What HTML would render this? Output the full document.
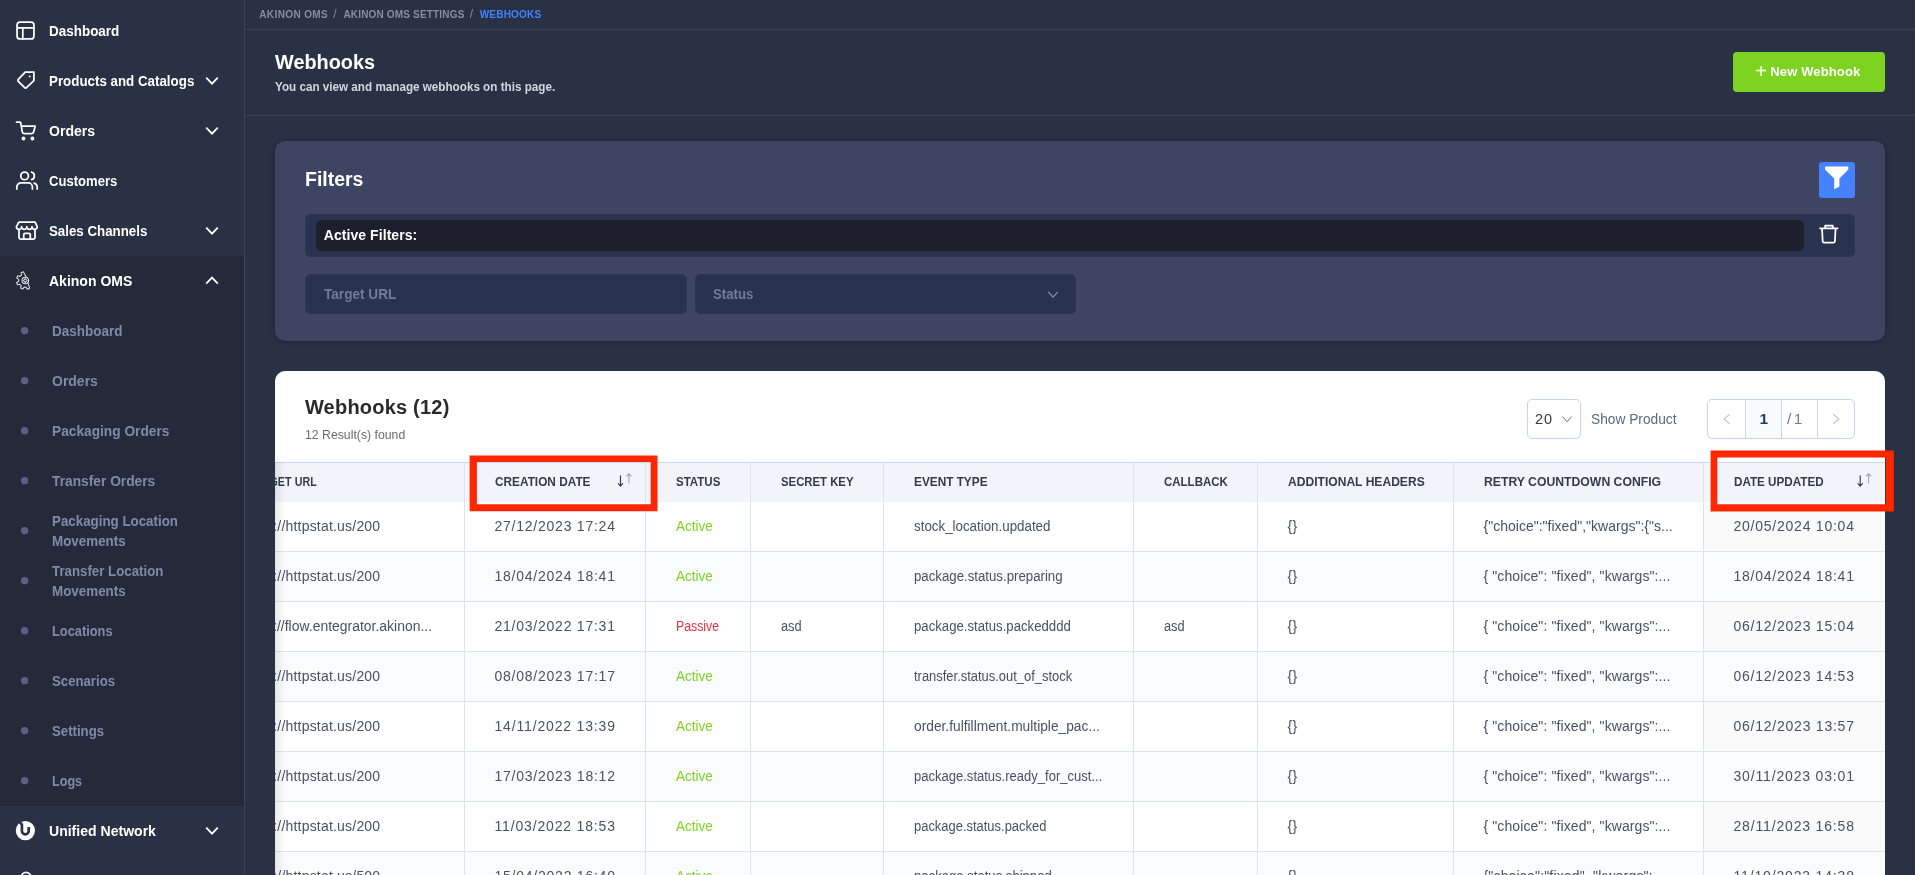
<!DOCTYPE html><html lang="en"><head><meta charset="utf-8"><title>Webhooks</title><style>
*{box-sizing:border-box;margin:0;padding:0}
html,body{width:1915px;height:875px;overflow:hidden;background:#293145;font-family:"Liberation Sans",sans-serif;}
.root{position:absolute;left:0;top:0;width:1915px;height:875px;overflow:hidden;will-change:transform}
.t{position:absolute;white-space:nowrap;display:block}
aside{position:absolute;left:0;top:0;width:245px;height:875px;background:#293145;border-right:1px solid #3e4353;overflow:hidden;z-index:5}
.sub{position:absolute;left:0;top:256px;width:244px;height:550px;background:#252a3b}
svg{position:absolute;overflow:visible}
main{position:absolute;left:0;top:0;width:1915px;height:875px;overflow:hidden}
.crumb{position:absolute;left:245px;top:0;width:1670px;height:30px;border-bottom:1px solid #3e4353}
.head{position:absolute;left:245px;top:30px;width:1670px;height:86px;border-bottom:1px solid #3e4353}
.btn-new{position:absolute;left:1733px;top:52px;width:152px;height:40px;border-radius:4px;background:#7ed321;border:0;padding:0;font:inherit;display:block}
.fcard{position:absolute;left:275px;top:141px;width:1610px;height:200px;border-radius:10px;background:#3d4562;box-shadow:0 1px 5px rgba(0,0,0,.3)}
.fbtn{position:absolute;left:1819px;top:162px;width:36px;height:36px;border-radius:3px;background:#4482ff}
.af{position:absolute;left:305px;top:214px;width:1550px;height:43px;border-radius:5px;background:#29334f;border:1px solid #2e3454}
.afi{position:absolute;left:315.8px;top:220px;width:1488.2px;height:31px;border-radius:5px;background:#1e1f2d}
.inp{position:absolute;top:274px;height:40px;border-radius:5px;background:#29334f;border:1px solid #2e3454}
.tcard{position:absolute;left:275px;top:371px;width:1610px;height:520px;border-radius:10px 10px 0 0;background:#fff;overflow:hidden}

table{position:absolute;left:-60px;top:91px;border-collapse:separate;border-spacing:0;table-layout:fixed;width:1670px}
th,td{position:relative;border-right:1px solid #dae5e8;padding:0;overflow:hidden;text-align:left;font-weight:400}
th{height:40px;background:#f2f4f9;border-top:1px solid #c8d7ec}
td{height:50px;border-bottom:1px solid #dae5e8;background:#fff}
tr.alt td{background:#fafbfd}
td.sorted{background:#fafafa}
th:last-child,td:last-child{border-right:none}
.lshadow{position:absolute;left:0;top:91px;width:10px;height:500px;background:linear-gradient(to right,rgba(0,0,0,.09),rgba(0,0,0,0));}
.sel{position:absolute;left:1252px;top:28px;width:54px;height:40px;border:1px solid #c5d6ee;border-radius:5px;background:#fff}
.pg{position:absolute;left:1432px;top:28px;width:148px;height:40px;border:1px solid #c5d6ee;border-radius:5px;background:#fff;overflow:hidden}
.pg i{position:absolute;top:0;width:1px;height:40px;background:#c5d6ee}
.pg b{position:absolute;left:38px;top:0;width:36px;height:38px;background:#f8fafc}
</style></head><body><div class="root"><aside><nav><div class="sub"></div><span class="t" id="m0" style="left:48.99px;top:23.73px;font-size:14.5px;line-height:14.5px;font-weight:700;color:#ffffff;transform:scaleX(0.9281);transform-origin:0 50%;">Dashboard</span><span class="t" id="m1" style="left:48.99px;top:73.73px;font-size:14.5px;line-height:14.5px;font-weight:700;color:#ffffff;transform:scaleX(0.9201);transform-origin:0 50%;">Products and Catalogs</span><svg style="left:0;top:0" width="1" height="1"><path d="M206.20 77.60 L212.00 83.60 L217.80 77.60" fill="none" stroke="#fff" stroke-width="1.8" stroke-linecap="butt" stroke-linejoin="miter"/></svg><span class="t" id="m2" style="left:48.99px;top:123.73px;font-size:14.5px;line-height:14.5px;font-weight:700;color:#ffffff;transform:scaleX(0.9694);transform-origin:0 50%;">Orders</span><svg style="left:0;top:0" width="1" height="1"><path d="M206.20 127.60 L212.00 133.60 L217.80 127.60" fill="none" stroke="#fff" stroke-width="1.8" stroke-linecap="butt" stroke-linejoin="miter"/></svg><span class="t" id="m3" style="left:48.99px;top:173.73px;font-size:14.5px;line-height:14.5px;font-weight:700;color:#ffffff;transform:scaleX(0.9017);transform-origin:0 50%;">Customers</span><span class="t" id="m4" style="left:48.99px;top:223.73px;font-size:14.5px;line-height:14.5px;font-weight:700;color:#ffffff;transform:scaleX(0.9171);transform-origin:0 50%;">Sales Channels</span><svg style="left:0;top:0" width="1" height="1"><path d="M206.20 227.60 L212.00 233.60 L217.80 227.60" fill="none" stroke="#fff" stroke-width="1.8" stroke-linecap="butt" stroke-linejoin="miter"/></svg><span class="t" id="m5" style="left:48.99px;top:273.73px;font-size:14.5px;line-height:14.5px;font-weight:700;color:#ffffff;transform:scaleX(0.9664);transform-origin:0 50%;">Akinon OMS</span><svg style="left:0;top:0" width="1" height="1"><path d="M206.20 283.60 L212.00 277.60 L217.80 283.60" fill="none" stroke="#fff" stroke-width="1.8" stroke-linecap="butt" stroke-linejoin="miter"/></svg><span class="t" id="m6" style="left:48.99px;top:823.73px;font-size:14.5px;line-height:14.5px;font-weight:700;color:#ffffff;transform:scaleX(0.9686);transform-origin:0 50%;">Unified Network</span><svg style="left:0;top:0" width="1" height="1"><path d="M206.20 827.60 L212.00 833.60 L217.80 827.60" fill="none" stroke="#fff" stroke-width="1.8" stroke-linecap="butt" stroke-linejoin="miter"/></svg><span class="t" id="s0" style="left:51.80px;top:324.18px;font-size:14.2px;line-height:14.2px;font-weight:700;color:#808aa8;transform:scaleX(0.9497);transform-origin:0 50%;">Dashboard</span><span class="t" id="s1" style="left:51.80px;top:374.18px;font-size:14.2px;line-height:14.2px;font-weight:700;color:#808aa8;transform:scaleX(0.9860);transform-origin:0 50%;">Orders</span><span class="t" id="s2" style="left:51.80px;top:424.18px;font-size:14.2px;line-height:14.2px;font-weight:700;color:#808aa8;transform:scaleX(0.9666);transform-origin:0 50%;">Packaging Orders</span><span class="t" id="s3" style="left:51.80px;top:474.18px;font-size:14.2px;line-height:14.2px;font-weight:700;color:#808aa8;transform:scaleX(0.9700);transform-origin:0 50%;">Transfer Orders</span><span class="t" id="s4" style="left:51.80px;top:514.18px;font-size:14.2px;line-height:14.2px;font-weight:700;color:#808aa8;transform:scaleX(0.9399);transform-origin:0 50%;">Packaging Location</span><span class="t" id="s5" style="left:51.80px;top:534.18px;font-size:14.2px;line-height:14.2px;font-weight:700;color:#808aa8;transform:scaleX(0.9438);transform-origin:0 50%;">Movements</span><span class="t" id="s6" style="left:51.80px;top:564.18px;font-size:14.2px;line-height:14.2px;font-weight:700;color:#808aa8;transform:scaleX(0.9356);transform-origin:0 50%;">Transfer Location</span><span class="t" id="s7" style="left:51.80px;top:584.18px;font-size:14.2px;line-height:14.2px;font-weight:700;color:#808aa8;transform:scaleX(0.9438);transform-origin:0 50%;">Movements</span><span class="t" id="s8" style="left:51.80px;top:624.18px;font-size:14.2px;line-height:14.2px;font-weight:700;color:#808aa8;transform:scaleX(0.9039);transform-origin:0 50%;">Locations</span><span class="t" id="s9" style="left:51.80px;top:674.18px;font-size:14.2px;line-height:14.2px;font-weight:700;color:#808aa8;transform:scaleX(0.9300);transform-origin:0 50%;">Scenarios</span><span class="t" id="s10" style="left:51.80px;top:724.18px;font-size:14.2px;line-height:14.2px;font-weight:700;color:#808aa8;transform:scaleX(0.9305);transform-origin:0 50%;">Settings</span><span class="t" id="s11" style="left:51.80px;top:774.18px;font-size:14.2px;line-height:14.2px;font-weight:700;color:#808aa8;transform:scaleX(0.8875);transform-origin:0 50%;">Logs</span><svg style="left:0;top:0" width="245" height="875" fill="none" stroke="#fff" stroke-width="1.75" stroke-linecap="round" stroke-linejoin="round"><rect x="17.05" y="22.05" width="16.9" height="16.9" rx="3"/><path d="M17.05 27.8H33.95M22.8 27.8V38.95"/><path d="M25.2 72.2H33.9V80.6L26.5 87.7a1.3 1.3 0 0 1-1.85 0L18.3 81.3a1.3 1.3 0 0 1 0-1.85Z"/><circle cx="29.7" cy="76.4" r="0.9" fill="#fff" stroke="none"/><path d="M16.5 122.2h3.3a.9.9 0 0 1 .9.7L22.3 131.900a2 2 0 0 0 2 1.700h7.300a2 2 0 0 0 2-1.700L35.200 126.200H21.400"/><circle cx="23.5" cy="138.5" r="1.1"/><circle cx="32.4" cy="138.5" r="1.100"/><circle cx="24.6" cy="175.9" r="3.85"/><path d="M16.8 189v-1.900a4.200 4.200 0 0 1 4.200-4.200h7.200a4.200 4.200 0 0 1 4.200 4.200V189"/><path d="M31.6 172.200a3.850 3.850 0 0 1 0 7.400"/><path d="M37.2 189v-1.900a4.200 4.200 0 0 0-3.100-4.050"/><path d="M18.9 222.1h16.200l2.100 4.600a2.600 2.600 0 0 1-5.200 0 2.600 2.600 0 0 1-5.200 0 2.600 2.600 0 0 1-5.200 0 2.600 2.600 0 0 1-5.200 0Z"/><path d="M19 229.6V237.600a1.500 1.500 0 0 0 1.500 1.500h13a1.500 1.500 0 0 0 1.500-1.500V229.600"/><path d="M23.700 239v-4.300a1.400 1.400 0 0 1 1.400-1.400h3.800a1.400 1.400 0 0 1 1.400 1.400V239"/><circle cx="26.1" cy="877.2" r="4.800"/><g stroke="#dfe1e7" stroke-width="1.05"><path d="M26.32 277.36 L23.30 271.83 L20.99 272.72 L21.46 275.01 L20.02 276.38 L17.75 275.78 L16.74 278.05 L18.70 279.34 L18.65 281.32 L16.63 282.50 L17.52 284.81 L19.81 284.34 L21.18 285.78 L20.58 288.05 L22.85 289.06 L24.14 287.10 L26.12 287.15 L27.30 289.17 L29.61 288.28 L27.90 282.53"/><circle cx="25.30" cy="280.50" r="3.300"/><path d="M25.30 280.50m-1.900 0l1.900-1.900 1.900 1.900-1.900 1.900z"/></g><g stroke="none" fill="#5d5f86"><circle cx="24.65" cy="330.65" r="3.7"/><circle cx="24.65" cy="380.65" r="3.7"/><circle cx="24.65" cy="430.65" r="3.7"/><circle cx="24.65" cy="480.65" r="3.7"/><circle cx="24.65" cy="530.65" r="3.7"/><circle cx="24.65" cy="580.65" r="3.7"/><circle cx="24.65" cy="630.65" r="3.7"/><circle cx="24.65" cy="680.65" r="3.7"/><circle cx="24.65" cy="730.65" r="3.7"/><circle cx="24.65" cy="780.65" r="3.7"/></g><g stroke="none"><circle cx="25.4" cy="830.6" r="9.600" fill="#fff"/><path d="M19.300 821.700L21.900 824.700V830.900a3.400 3.400 0 0 0 6.800 0V827" stroke="#293145" stroke-width="2.700" stroke-linecap="butt" fill="none"/></g></svg></nav></aside><main><div class="crumb"></div><span class="t" id="c1" style="left:259.25px;top:9.93px;font-size:10px;line-height:10px;font-weight:700;color:#878da1;letter-spacing:0.389px;">AKINON OMS</span><span class="t" id="c2" style="left:333.20px;top:8.44px;font-size:12px;line-height:12px;font-weight:400;color:#878da1;">/</span><span class="t" id="c3" style="left:343.45px;top:9.93px;font-size:10px;line-height:10px;font-weight:700;color:#878da1;letter-spacing:0.172px;">AKINON OMS SETTINGS</span><span class="t" id="c4" style="left:469.70px;top:8.44px;font-size:12px;line-height:12px;font-weight:400;color:#878da1;">/</span><span class="t" id="c5" style="left:479.75px;top:9.93px;font-size:10px;line-height:10px;font-weight:700;color:#4482ff;letter-spacing:0.186px;">WEBHOOKS</span><div class="head"></div><span class="t" id="h1" style="left:275.00px;top:51.87px;font-size:20px;line-height:20px;font-weight:700;color:#fff;transform:scaleX(0.9934);transform-origin:0 50%;">Webhooks</span><span class="t" id="h2" style="left:274.95px;top:80.76px;font-size:12.8px;line-height:12.8px;font-weight:700;color:#d3d6dd;transform:scaleX(0.9127);transform-origin:0 50%;">You can view and manage webhooks on this page.</span><button class="btn-new" type="button"><span class="t" id="nb0" style="left:22.20px;top:9.37px;font-size:20px;line-height:20px;font-weight:400;color:#fff;">+</span><span class="t" id="nb" style="left:37.25px;top:13.00px;font-size:13px;line-height:13px;font-weight:700;color:#fff;letter-spacing:0.136px;">New Webhook</span></button><div class="fcard"></div><span class="t" id="f1" style="left:304.70px;top:169.37px;font-size:20px;line-height:20px;font-weight:700;color:#fff;transform:scaleX(0.9728);transform-origin:0 50%;">Filters</span><div class="fbtn"></div><svg style="left:0;top:0" width="1" height="1"><path d="M1825 166.4h23.3v3.100l-8.900 9v8l-5.200 2.700v-10.700l-9.200-9z" fill="#fff"/></svg><div class="af"></div><div class="afi"><span class="t" id="f2" style="left:7.91px;top:8.45px;font-size:14px;line-height:14px;font-weight:700;color:#fff;letter-spacing:0.069px;">Active Filters:</span></div><svg style="left:0;top:0" width="1" height="1" fill="none" stroke="#fff" stroke-width="1.8" stroke-linejoin="round" stroke-linecap="round"><path d="M1820 228.300H1837.600M1825.200 228v-2.300h7.600v2.300M1822 228.300l.7 13a1.500 1.500 0 0 0 1.500 1.400h9.200a1.500 1.500 0 0 0 1.500-1.400l.7-13"/></svg><div class="inp" style="left:305px;width:382px"><span class="t" id="f3" style="left:17.71px;top:12.45px;font-size:14px;line-height:14px;font-weight:700;color:#737b99;transform:scaleX(0.9710);transform-origin:0 50%;">Target URL</span></div><div class="inp" style="left:695px;width:381px"><span class="t" id="f4" style="left:17.41px;top:12.45px;font-size:14px;line-height:14px;font-weight:700;color:#737b99;transform:scaleX(0.9407);transform-origin:0 50%;">Status</span></div><svg style="left:0;top:0" width="1" height="1"><path d="M1048.25 291.90 L1053.00 297.10 L1057.75 291.90" fill="none" stroke="#8f96ad" stroke-width="1.1" stroke-linecap="butt" stroke-linejoin="miter"/></svg><section class="tcard"><span class="t" id="t1" style="left:29.90px;top:26.07px;font-size:20px;line-height:20px;font-weight:700;color:#2a2a2a;letter-spacing:0.210px;">Webhooks (12)</span><span class="t" id="t2" style="left:30.13px;top:56.87px;font-size:13.5px;line-height:13.5px;font-weight:400;color:#6c6c6c;transform:scaleX(0.9085);transform-origin:0 50%;">12 Result(s) found</span><div class="sel"></div><span class="t" id="t3" style="left:1259.99px;top:41.13px;font-size:14.5px;line-height:14.5px;font-weight:400;color:#3a3a3a;letter-spacing:0.964px;">20</span><span class="t" id="t4" style="left:1316.09px;top:41.13px;font-size:14.5px;line-height:14.5px;font-weight:400;color:#5b6884;transform:scaleX(0.9471);transform-origin:0 50%;">Show Product</span><div class="pg"><b></b><i style="left:37px"></i><i style="left:73px"></i><i style="left:109px"></i></div><span class="t" id="t5" style="left:1484.40px;top:39.68px;font-size:15.5px;line-height:15.5px;font-weight:700;color:#1f3a5f;">1</span><span class="t" id="t6" style="left:1511.96px;top:40.28px;font-size:15.5px;line-height:15.5px;font-weight:400;color:#7b7b7b;letter-spacing:2.457px;">/1</span><table><colgroup><col style="width:250px"><col style="width:181px"><col style="width:105px"><col style="width:133px"><col style="width:250px"><col style="width:124px"><col style="width:196px"><col style="width:250px"><col style="width:181px"></colgroup><thead><tr><th><span class="t" id="th0" style="left:32.97px;top:12.80px;font-size:12.4px;line-height:12.4px;font-weight:700;color:#323b52;letter-spacing:0.122px;transform:scaleX(.86);transform-origin:0 50%;">TARGET URL</span></th><th><span class="t" id="th1" style="left:29.57px;top:12.80px;font-size:12.4px;line-height:12.4px;font-weight:700;color:#323b52;transform:scaleX(0.9547);transform-origin:0 50%;">CREATION DATE</span><svg style="left:0;top:0" width="1" height="1" fill="none" stroke-width="1.15" stroke-linecap="round" stroke-linejoin="round"><path d="M155.5 12.9v10.2m-2.200-2.400l2.200 2.400 2.200-2.400" stroke="#2f3a50"/><path d="M163.9 20v-9.400m-2.200 2.400l2.200-2.400 2.200 2.400" stroke="#a4aabb"/></svg></th><th><span class="t" id="th2" style="left:29.57px;top:12.80px;font-size:12.4px;line-height:12.4px;font-weight:700;color:#323b52;transform:scaleX(0.9284);transform-origin:0 50%;">STATUS</span></th><th><span class="t" id="th3" style="left:29.57px;top:12.80px;font-size:12.4px;line-height:12.4px;font-weight:700;color:#323b52;transform:scaleX(0.9158);transform-origin:0 50%;">SECRET KEY</span></th><th><span class="t" id="th4" style="left:29.57px;top:12.80px;font-size:12.4px;line-height:12.4px;font-weight:700;color:#323b52;transform:scaleX(0.9532);transform-origin:0 50%;">EVENT TYPE</span></th><th><span class="t" id="th5" style="left:29.57px;top:12.80px;font-size:12.4px;line-height:12.4px;font-weight:700;color:#323b52;transform:scaleX(0.9272);transform-origin:0 50%;">CALLBACK</span></th><th><span class="t" id="th6" style="left:29.57px;top:12.80px;font-size:12.4px;line-height:12.4px;font-weight:700;color:#323b52;transform:scaleX(0.9750);transform-origin:0 50%;">ADDITIONAL HEADERS</span></th><th><span class="t" id="th7" style="left:29.57px;top:12.80px;font-size:12.4px;line-height:12.4px;font-weight:700;color:#323b52;transform:scaleX(0.9858);transform-origin:0 50%;">RETRY COUNTDOWN CONFIG</span></th><th><span class="t" id="th8" style="left:29.57px;top:12.80px;font-size:12.4px;line-height:12.4px;font-weight:700;color:#323b52;transform:scaleX(0.9410);transform-origin:0 50%;">DATE UPDATED</span><svg style="left:0;top:0" width="1" height="1" fill="none" stroke-width="1.15" stroke-linecap="round" stroke-linejoin="round"><path d="M156.2 12.9v10.2m-2.200-2.400l2.200 2.400 2.200-2.400" stroke="#2f3a50"/><path d="M164.6 20v-9.400m-2.200 2.400l2.200-2.400 2.200 2.400" stroke="#a4aabb"/></svg></th></tr></thead><tbody><tr><td><span class="t" id="r0p" style="left:29.51px;top:17.15px;font-size:14px;line-height:14px;font-weight:400;color:#485261;letter-spacing:1.377px;">http:</span><span class="t" id="r0c0" style="left:62.31px;top:17.15px;font-size:14px;line-height:14px;font-weight:400;color:#485261;letter-spacing:0.202px;">//httpstat.us/200</span></td><td><span class="t" id="r0c1" style="left:29.51px;top:17.15px;font-size:14px;line-height:14px;font-weight:400;color:#485261;letter-spacing:0.764px;">27/12/2023 17:24</span></td><td><span class="t" id="r0c2" style="left:29.51px;top:17.15px;font-size:14px;line-height:14px;font-weight:400;color:#7ed321;transform:scaleX(0.9642);transform-origin:0 50%;">Active</span></td><td></td><td><span class="t" id="r0c4" style="left:29.51px;top:17.15px;font-size:14px;line-height:14px;font-weight:400;color:#485261;transform:scaleX(0.9528);transform-origin:0 50%;">stock_location.updated</span></td><td></td><td><span class="t" id="r0c6" style="left:29.51px;top:17.15px;font-size:14px;line-height:14px;font-weight:400;color:#485261;letter-spacing:0.401px;">{}</span></td><td><span class="t" id="r0c7" style="left:29.51px;top:17.15px;font-size:14px;line-height:14px;font-weight:400;color:#485261;letter-spacing:0.012px;">{"choice":"fixed","kwargs":{"s...</span></td><td class="sorted"><span class="t" id="r0c8" style="left:29.51px;top:17.15px;font-size:14px;line-height:14px;font-weight:400;color:#485261;letter-spacing:0.764px;">20/05/2024 10:04</span></td></tr><tr class="alt"><td><span class="t" id="r1p" style="left:29.51px;top:17.15px;font-size:14px;line-height:14px;font-weight:400;color:#485261;letter-spacing:1.377px;">http:</span><span class="t" id="r1c0" style="left:62.31px;top:17.15px;font-size:14px;line-height:14px;font-weight:400;color:#485261;letter-spacing:0.202px;">//httpstat.us/200</span></td><td><span class="t" id="r1c1" style="left:29.51px;top:17.15px;font-size:14px;line-height:14px;font-weight:400;color:#485261;letter-spacing:0.764px;">18/04/2024 18:41</span></td><td><span class="t" id="r1c2" style="left:29.51px;top:17.15px;font-size:14px;line-height:14px;font-weight:400;color:#7ed321;transform:scaleX(0.9642);transform-origin:0 50%;">Active</span></td><td></td><td><span class="t" id="r1c4" style="left:29.51px;top:17.15px;font-size:14px;line-height:14px;font-weight:400;color:#485261;transform:scaleX(0.9449);transform-origin:0 50%;">package.status.preparing</span></td><td></td><td><span class="t" id="r1c6" style="left:29.51px;top:17.15px;font-size:14px;line-height:14px;font-weight:400;color:#485261;letter-spacing:0.401px;">{}</span></td><td><span class="t" id="r1c7" style="left:29.51px;top:17.15px;font-size:14px;line-height:14px;font-weight:400;color:#485261;letter-spacing:0.096px;">{ "choice": "fixed", "kwargs":...</span></td><td class="sorted"><span class="t" id="r1c8" style="left:29.51px;top:17.15px;font-size:14px;line-height:14px;font-weight:400;color:#485261;letter-spacing:0.764px;">18/04/2024 18:41</span></td></tr><tr><td><span class="t" id="r2p" style="left:29.51px;top:17.15px;font-size:14px;line-height:14px;font-weight:400;color:#485261;letter-spacing:1.377px;">http:</span><span class="t" id="r2c0" style="left:62.31px;top:17.15px;font-size:14px;line-height:14px;font-weight:400;color:#485261;transform:scaleX(0.9962);transform-origin:0 50%;">//flow.entegrator.akinon...</span></td><td><span class="t" id="r2c1" style="left:29.51px;top:17.15px;font-size:14px;line-height:14px;font-weight:400;color:#485261;letter-spacing:0.764px;">21/03/2022 17:31</span></td><td><span class="t" id="r2c2" style="left:29.51px;top:17.15px;font-size:14px;line-height:14px;font-weight:400;color:#e8323f;transform:scaleX(0.8782);transform-origin:0 50%;">Passive</span></td><td><span class="t" id="r2c3" style="left:29.51px;top:17.15px;font-size:14px;line-height:14px;font-weight:400;color:#485261;transform:scaleX(0.9150);transform-origin:0 50%;">asd</span></td><td><span class="t" id="r2c4" style="left:29.51px;top:17.15px;font-size:14px;line-height:14px;font-weight:400;color:#485261;transform:scaleX(0.9417);transform-origin:0 50%;">package.status.packedddd</span></td><td><span class="t" id="r2c5" style="left:29.51px;top:17.15px;font-size:14px;line-height:14px;font-weight:400;color:#485261;transform:scaleX(0.9150);transform-origin:0 50%;">asd</span></td><td><span class="t" id="r2c6" style="left:29.51px;top:17.15px;font-size:14px;line-height:14px;font-weight:400;color:#485261;letter-spacing:0.401px;">{}</span></td><td><span class="t" id="r2c7" style="left:29.51px;top:17.15px;font-size:14px;line-height:14px;font-weight:400;color:#485261;letter-spacing:0.096px;">{ "choice": "fixed", "kwargs":...</span></td><td class="sorted"><span class="t" id="r2c8" style="left:29.51px;top:17.15px;font-size:14px;line-height:14px;font-weight:400;color:#485261;letter-spacing:0.764px;">06/12/2023 15:04</span></td></tr><tr class="alt"><td><span class="t" id="r3p" style="left:29.51px;top:17.15px;font-size:14px;line-height:14px;font-weight:400;color:#485261;letter-spacing:1.377px;">http:</span><span class="t" id="r3c0" style="left:62.31px;top:17.15px;font-size:14px;line-height:14px;font-weight:400;color:#485261;letter-spacing:0.202px;">//httpstat.us/200</span></td><td><span class="t" id="r3c1" style="left:29.51px;top:17.15px;font-size:14px;line-height:14px;font-weight:400;color:#485261;letter-spacing:0.764px;">08/08/2023 17:17</span></td><td><span class="t" id="r3c2" style="left:29.51px;top:17.15px;font-size:14px;line-height:14px;font-weight:400;color:#7ed321;transform:scaleX(0.9642);transform-origin:0 50%;">Active</span></td><td></td><td><span class="t" id="r3c4" style="left:29.51px;top:17.15px;font-size:14px;line-height:14px;font-weight:400;color:#485261;transform:scaleX(0.9243);transform-origin:0 50%;">transfer.status.out_of_stock</span></td><td></td><td><span class="t" id="r3c6" style="left:29.51px;top:17.15px;font-size:14px;line-height:14px;font-weight:400;color:#485261;letter-spacing:0.401px;">{}</span></td><td><span class="t" id="r3c7" style="left:29.51px;top:17.15px;font-size:14px;line-height:14px;font-weight:400;color:#485261;letter-spacing:0.096px;">{ "choice": "fixed", "kwargs":...</span></td><td class="sorted"><span class="t" id="r3c8" style="left:29.51px;top:17.15px;font-size:14px;line-height:14px;font-weight:400;color:#485261;letter-spacing:0.764px;">06/12/2023 14:53</span></td></tr><tr><td><span class="t" id="r4p" style="left:29.51px;top:17.15px;font-size:14px;line-height:14px;font-weight:400;color:#485261;letter-spacing:1.377px;">http:</span><span class="t" id="r4c0" style="left:62.31px;top:17.15px;font-size:14px;line-height:14px;font-weight:400;color:#485261;letter-spacing:0.202px;">//httpstat.us/200</span></td><td><span class="t" id="r4c1" style="left:29.51px;top:17.15px;font-size:14px;line-height:14px;font-weight:400;color:#485261;letter-spacing:0.834px;">14/11/2022 13:39</span></td><td><span class="t" id="r4c2" style="left:29.51px;top:17.15px;font-size:14px;line-height:14px;font-weight:400;color:#7ed321;transform:scaleX(0.9642);transform-origin:0 50%;">Active</span></td><td></td><td><span class="t" id="r4c4" style="left:29.51px;top:17.15px;font-size:14px;line-height:14px;font-weight:400;color:#485261;transform:scaleX(0.9829);transform-origin:0 50%;">order.fulfillment.multiple_pac...</span></td><td></td><td><span class="t" id="r4c6" style="left:29.51px;top:17.15px;font-size:14px;line-height:14px;font-weight:400;color:#485261;letter-spacing:0.401px;">{}</span></td><td><span class="t" id="r4c7" style="left:29.51px;top:17.15px;font-size:14px;line-height:14px;font-weight:400;color:#485261;letter-spacing:0.096px;">{ "choice": "fixed", "kwargs":...</span></td><td class="sorted"><span class="t" id="r4c8" style="left:29.51px;top:17.15px;font-size:14px;line-height:14px;font-weight:400;color:#485261;letter-spacing:0.764px;">06/12/2023 13:57</span></td></tr><tr class="alt"><td><span class="t" id="r5p" style="left:29.51px;top:17.15px;font-size:14px;line-height:14px;font-weight:400;color:#485261;letter-spacing:1.377px;">http:</span><span class="t" id="r5c0" style="left:62.31px;top:17.15px;font-size:14px;line-height:14px;font-weight:400;color:#485261;letter-spacing:0.202px;">//httpstat.us/200</span></td><td><span class="t" id="r5c1" style="left:29.51px;top:17.15px;font-size:14px;line-height:14px;font-weight:400;color:#485261;letter-spacing:0.764px;">17/03/2023 18:12</span></td><td><span class="t" id="r5c2" style="left:29.51px;top:17.15px;font-size:14px;line-height:14px;font-weight:400;color:#7ed321;transform:scaleX(0.9642);transform-origin:0 50%;">Active</span></td><td></td><td><span class="t" id="r5c4" style="left:29.51px;top:17.15px;font-size:14px;line-height:14px;font-weight:400;color:#485261;transform:scaleX(0.9304);transform-origin:0 50%;">package.status.ready_for_cust...</span></td><td></td><td><span class="t" id="r5c6" style="left:29.51px;top:17.15px;font-size:14px;line-height:14px;font-weight:400;color:#485261;letter-spacing:0.401px;">{}</span></td><td><span class="t" id="r5c7" style="left:29.51px;top:17.15px;font-size:14px;line-height:14px;font-weight:400;color:#485261;letter-spacing:0.096px;">{ "choice": "fixed", "kwargs":...</span></td><td class="sorted"><span class="t" id="r5c8" style="left:29.51px;top:17.15px;font-size:14px;line-height:14px;font-weight:400;color:#485261;letter-spacing:0.834px;">30/11/2023 03:01</span></td></tr><tr><td><span class="t" id="r6p" style="left:29.51px;top:17.15px;font-size:14px;line-height:14px;font-weight:400;color:#485261;letter-spacing:1.377px;">http:</span><span class="t" id="r6c0" style="left:62.31px;top:17.15px;font-size:14px;line-height:14px;font-weight:400;color:#485261;letter-spacing:0.202px;">//httpstat.us/200</span></td><td><span class="t" id="r6c1" style="left:29.51px;top:17.15px;font-size:14px;line-height:14px;font-weight:400;color:#485261;letter-spacing:0.834px;">11/03/2022 18:53</span></td><td><span class="t" id="r6c2" style="left:29.51px;top:17.15px;font-size:14px;line-height:14px;font-weight:400;color:#7ed321;transform:scaleX(0.9642);transform-origin:0 50%;">Active</span></td><td></td><td><span class="t" id="r6c4" style="left:29.51px;top:17.15px;font-size:14px;line-height:14px;font-weight:400;color:#485261;transform:scaleX(0.9242);transform-origin:0 50%;">package.status.packed</span></td><td></td><td><span class="t" id="r6c6" style="left:29.51px;top:17.15px;font-size:14px;line-height:14px;font-weight:400;color:#485261;letter-spacing:0.401px;">{}</span></td><td><span class="t" id="r6c7" style="left:29.51px;top:17.15px;font-size:14px;line-height:14px;font-weight:400;color:#485261;letter-spacing:0.096px;">{ "choice": "fixed", "kwargs":...</span></td><td class="sorted"><span class="t" id="r6c8" style="left:29.51px;top:17.15px;font-size:14px;line-height:14px;font-weight:400;color:#485261;letter-spacing:0.834px;">28/11/2023 16:58</span></td></tr><tr class="alt"><td><span class="t" id="r7p" style="left:29.51px;top:17.15px;font-size:14px;line-height:14px;font-weight:400;color:#485261;letter-spacing:1.377px;">http:</span><span class="t" id="r7c0" style="left:62.31px;top:17.15px;font-size:14px;line-height:14px;font-weight:400;color:#485261;letter-spacing:0.202px;">//httpstat.us/500</span></td><td><span class="t" id="r7c1" style="left:29.51px;top:17.15px;font-size:14px;line-height:14px;font-weight:400;color:#485261;letter-spacing:0.764px;">15/04/2022 16:40</span></td><td><span class="t" id="r7c2" style="left:29.51px;top:17.15px;font-size:14px;line-height:14px;font-weight:400;color:#7ed321;transform:scaleX(0.9642);transform-origin:0 50%;">Active</span></td><td></td><td><span class="t" id="r7c4" style="left:29.51px;top:17.15px;font-size:14px;line-height:14px;font-weight:400;color:#485261;transform:scaleX(0.9364);transform-origin:0 50%;">package.status.shipped</span></td><td></td><td><span class="t" id="r7c6" style="left:29.51px;top:17.15px;font-size:14px;line-height:14px;font-weight:400;color:#485261;letter-spacing:0.401px;">{}</span></td><td><span class="t" id="r7c7" style="left:29.51px;top:17.15px;font-size:14px;line-height:14px;font-weight:400;color:#485261;letter-spacing:0.172px;">{"choice":"fixed", "kwargs":...</span></td><td class="sorted"><span class="t" id="r7c8" style="left:29.51px;top:17.15px;font-size:14px;line-height:14px;font-weight:400;color:#485261;letter-spacing:0.834px;">11/10/2023 14:38</span></td></tr></tbody></table><div class="lshadow"></div><svg style="left:0;top:0" width="1" height="1" fill="none" stroke="#c2c7cf" stroke-width="1.2" stroke-linecap="round" stroke-linejoin="round"><path d="M1454.5 43.5l-5.500 4.500 5.500 4.500"/><path d="M1558.5 43.5l5.500 4.500-5.500 4.500"/></svg><svg style="left:0;top:0" width="1" height="1"><path d="M1287.40 45.50 L1292.00 50.70 L1296.60 45.50" fill="none" stroke="#5f6673" stroke-width="1" stroke-linecap="butt" stroke-linejoin="miter"/></svg></section><svg class="marks" style="left:0;top:0;z-index:9" width="1915" height="875"><path fill="#ff2600" fill-rule="evenodd" d="M469.6 455.4H657.5V511.2H469.6ZM476.9 462.1V504.3H650.7V462.1Z"/><path fill="#ff2600" fill-rule="evenodd" d="M1710.6 450.4H1893.8V511.6H1710.6ZM1717.3 457.5V504.3H1885.8V457.5Z"/></svg></main></div></body></html>
